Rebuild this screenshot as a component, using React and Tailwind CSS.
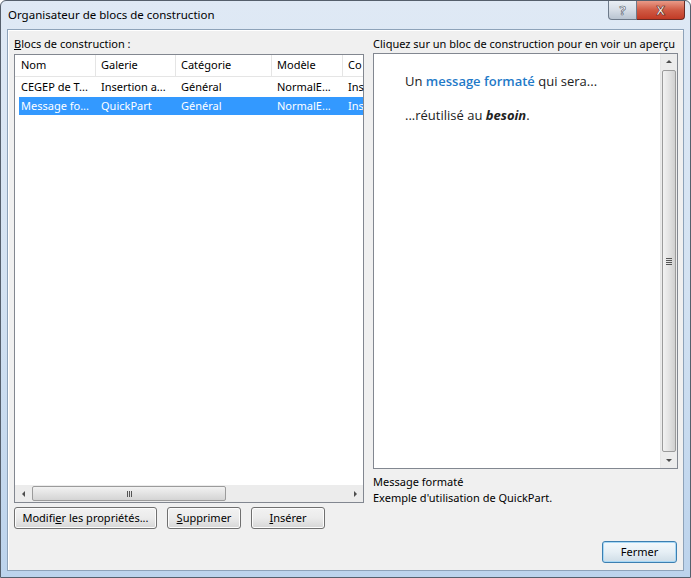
import React from "react";

const ui = { fontFamily: '"Noto Sans", "Open Sans", sans-serif' };
const prev = { fontFamily: '"Open Sans", "Noto Sans", sans-serif' };

function Btn({ children, w, def }) {
  return (
    <div
      className={`h-[22px] ${w} flex items-center justify-center rounded-[3px] border text-[11px] text-black ${
        def
          ? "border-[#3c7fb1] shadow-[inset_0_0_0_1px_#a8d8f5] bg-gradient-to-b from-[#f4f9fc] via-[#e6eff5] to-[#cfdde7]"
          : "border-[#707070] shadow-[inset_0_0_0_1px_#fcfcfc] bg-gradient-to-b from-[#f2f2f2] via-[#ebebeb] to-[#d6d6d6]"
      }`}
    >
      {children}
    </div>
  );
}

function Arrow({ dir }) {
  const paths = {
    left: "M5 1 L2 4 L5 7 Z",
    right: "M3 1 L6 4 L3 7 Z",
    up: "M1 5 L4 2 L7 5 Z",
    down: "M1 3 L4 6 L7 3 Z",
  };
  return (
    <svg width="8" height="8" viewBox="0 0 8 8">
      <path d={paths[dir]} fill="#4d4d4d" />
    </svg>
  );
}

const cols = [
  { w: "w-[80px]", h: "Nom", r1: "CEGEP de T..." },
  { w: "w-[80px]", h: "Galerie", r1: "Insertion a..." },
  { w: "w-[96px]", h: "Catégorie", r1: "Général" },
  { w: "w-[71px]", h: "Modèle", r1: "NormalE..." },
  { w: "w-[40px]", h: "Co", r1: "Ins" },
];

export default function App() {
  return (
    <div className="w-[691px] h-[578px] bg-white" style={ui}>
      <div className="w-[691px] h-[578px] flex flex-col border border-[#555f6c] rounded-t-[6px] bg-gradient-to-b from-[#dfe9f5] via-[#d3e2f2] to-[#bcd3ec] overflow-hidden">
        {/* title bar */}
        <div className="h-[28px] flex items-start shrink-0">
          <div className="pl-[7px] pt-[6px] text-[11.5px] text-black leading-[16px] flex-1">
            Organisateur de blocs de construction
          </div>
          <div className="flex mr-[5px]">
            <div className="w-[29px] h-[19px] flex items-center justify-center rounded-bl-[4px] border border-t-0 border-[#6d7a8a] bg-gradient-to-b from-[#e9eef4] via-[#d6dde6] to-[#b9c4d1]">
              <span className="text-[13px] font-bold text-white leading-none" style={{ WebkitTextStroke: "0.6px #4b5666" }}>?</span>
            </div>
            <div className="w-[48px] h-[19px] flex items-center justify-center rounded-br-[4px] border border-l-0 border-t-0 border-[#6b2a24] bg-gradient-to-b from-[#e99a88] via-[#d05a44] to-[#c13a25]">
              <span className="text-[13px] font-bold text-white leading-none" style={{ WebkitTextStroke: "0.6px #5a1d14" }}>X</span>
            </div>
          </div>
        </div>
        {/* content */}
        <div className="flex-1 mx-[6px] mb-[6px] border border-[#8da2b9] bg-[#f0f0f0] shadow-[inset_1px_1px_0_#ffffff] flex flex-col">
          <div className="flex flex-1 pl-[6px] pr-[5px] pt-[7px]">
            {/* left column */}
            <div className="w-[350px] flex flex-col">
              <div className="text-[11px] leading-[14px] text-black h-[16px]">
                <span className="underline">B</span>locs de construction :
              </div>
              <div className="mt-[1px] h-[449px] border border-[#828790] bg-white flex flex-col">
                <div className="flex h-[22px] border-b border-[#e5e5e5] pl-[1px]">
                  {cols.map((c, i) => (
                    <div key={i} className={`${c.w} shrink-0 h-full flex items-center pl-[5px] text-[11px] text-black border-r border-[#e5e5e5] overflow-hidden whitespace-nowrap`}>
                      {c.h}
                    </div>
                  ))}
                </div>
                <div className="flex h-[19px] mt-[1px] pl-[1px]">
                  {cols.map((c, i) => (
                    <div key={i} className={`${c.w} shrink-0 flex items-center pl-[5px] text-[11px] text-black overflow-hidden whitespace-nowrap`}>
                      {c.r1}
                    </div>
                  ))}
                </div>
                <div className="flex h-[18px] ml-[4px] bg-[#3399ff] overflow-hidden">
                  <div className="w-[77px] shrink-0 flex items-center pl-[2px] text-[11px] text-white whitespace-nowrap">Message fo...</div>
                  <div className="w-[80px] shrink-0 flex items-center pl-[5px] text-[11px] text-white whitespace-nowrap">QuickPart</div>
                  <div className="w-[96px] shrink-0 flex items-center pl-[5px] text-[11px] text-white whitespace-nowrap">Général</div>
                  <div className="w-[71px] shrink-0 flex items-center pl-[5px] text-[11px] text-white whitespace-nowrap">NormalE...</div>
                  <div className="w-[40px] shrink-0 flex items-center pl-[5px] text-[11px] text-white whitespace-nowrap">Ins</div>
                </div>
                <div className="flex-1" />
                {/* horizontal scrollbar */}
                <div className="h-[17px] flex items-stretch bg-[#ececec]">
                  <div className="w-[17px] flex items-center justify-center"><Arrow dir="left" /></div>
                  <div className="w-[194px] my-[1px] rounded-[2px] border border-[#9b9b9b] bg-gradient-to-b from-[#f2f2f2] via-[#e3e3e3] to-[#d4d4d4] flex items-center justify-center">
                    <div className="flex gap-[1px]">
                      <div className="w-[1px] h-[6px] bg-[#555]" />
                      <div className="w-[1px] h-[6px] bg-[#555]" />
                      <div className="w-[1px] h-[6px] bg-[#555]" />
                    </div>
                  </div>
                  <div className="flex-1" />
                  <div className="w-[17px] flex items-center justify-center"><Arrow dir="right" /></div>
                </div>
              </div>
              <div className="flex gap-[10px] mt-[4px]">
                <Btn w="w-[143px]">
                  <span>Modifi<span className="underline">e</span>r les propriétés...</span>
                </Btn>
                <Btn w="w-[74px]">
                  <span><span className="underline">S</span>upprimer</span>
                </Btn>
                <Btn w="w-[74px]">
                  <span><span className="underline">I</span>nsérer</span>
                </Btn>
              </div>
            </div>
            {/* right column */}
            <div className="ml-[9px] w-[305px] flex flex-col">
              <div className="text-[11px] leading-[14px] text-black h-[15px] whitespace-nowrap">
                Cliquez sur un bloc de construction pour en voir un aperçu
              </div>
              <div className="mt-[1px] h-[416px] border border-[#828790] bg-white flex">
                <div className="flex-1 pl-[31px] pt-[17px]" style={prev}>
                  <div className="text-[13px] leading-[20px] text-[#222]">
                    Un <span className="font-semibold text-[#1f7ac8]">message formaté</span> qui sera...
                  </div>
                  <div className="text-[13px] leading-[20px] text-[#222] mt-[14px]">
                    ...réutilisé au <span className="font-bold italic">besoin</span>.
                  </div>
                </div>
                <div className="w-[17px] flex flex-col bg-[#ececec] border-l border-[#e6e6e6]">
                  <div className="h-[16px] flex items-center justify-center"><Arrow dir="up" /></div>
                  <div className="flex-1 mx-[1px] rounded-[2px] border border-[#9b9b9b] bg-gradient-to-r from-[#f2f2f2] via-[#e3e3e3] to-[#d0d0d0] flex items-center justify-center">
                    <div className="flex flex-col gap-[1px]">
                      <div className="w-[6px] h-[1px] bg-[#555]" />
                      <div className="w-[6px] h-[1px] bg-[#555]" />
                      <div className="w-[6px] h-[1px] bg-[#555]" />
                      <div className="w-[6px] h-[1px] bg-[#555]" />
                    </div>
                  </div>
                  <div className="h-[16px] flex items-center justify-center"><Arrow dir="down" /></div>
                </div>
              </div>
              <div className="mt-[5px] text-[11px] leading-[16px] text-black">Message formaté</div>
              <div className="text-[11px] leading-[16px] text-black">Exemple d'utilisation de QuickPart.</div>
            </div>
          </div>
          <div className="flex justify-end pr-[6px] pb-[7px]">
            <Btn w="w-[75px]" def>Fermer</Btn>
          </div>
        </div>
      </div>
    </div>
  );
}
